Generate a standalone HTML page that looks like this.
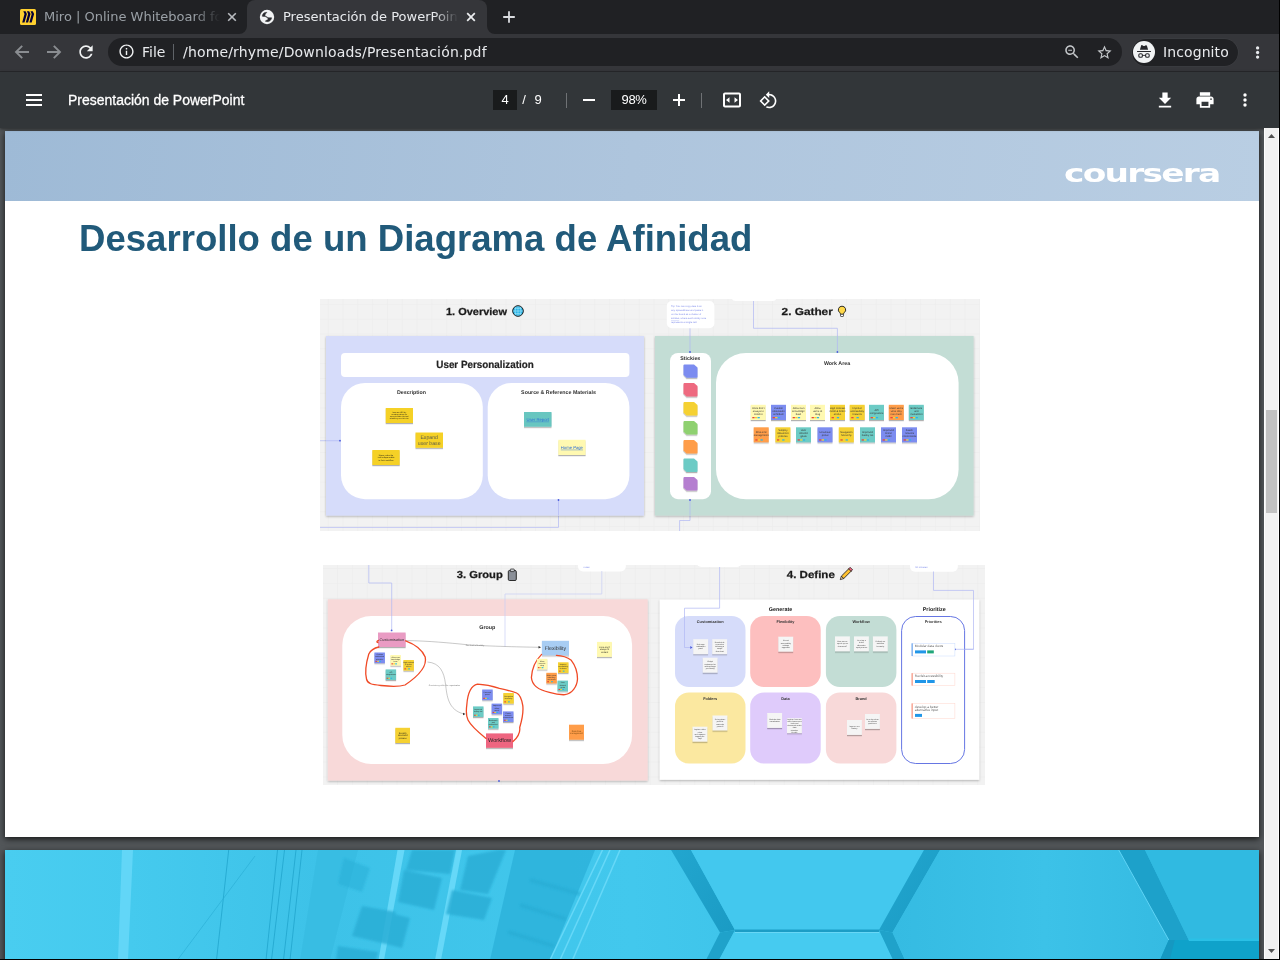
<!DOCTYPE html>
<html lang="es">
<head>
<meta charset="utf-8">
<title>Presentación de PowerPoint</title>
<style>
*{box-sizing:border-box;margin:0;padding:0}
html,body{width:1280px;height:960px;overflow:hidden;background:#525659;font-family:"DejaVu Sans","Liberation Sans",sans-serif}
.abs{position:absolute}
#root{will-change:transform;position:relative;width:1280px;height:960px;overflow:hidden;background:#525659}
/* browser chrome */
#tabstrip{left:0;top:0;width:1280px;height:34px;background:#202124}
#tab2{left:247px;top:0;width:240px;height:34px;background:#35363a;border-radius:8px 8px 0 0}
.tabtitle{font-size:13px;line-height:34px;white-space:nowrap;overflow:hidden;height:34px}
#navbar{left:0;top:34px;width:1280px;height:37px;background:#35363a}
#omni{left:108px;top:38px;width:1014px;height:28px;border-radius:14px;background:#202124}
#sep{left:0;top:71px;width:1280px;height:1px;background:#28292c}
#pdfbar{left:0;top:72px;width:1280px;height:56px;background:#323639;box-shadow:0 1px 3px rgba(0,0,0,.5)}
.rob{font-family:"Liberation Sans",sans-serif;color:#fff}
/* pages */
#page1{left:5px;top:131px;width:1254px;height:706px;background:#fff;box-shadow:0 2px 6px rgba(0,0,0,.75);overflow:hidden}
#page2{left:5px;top:850px;width:1254px;height:120px;background:#3ec3ea;box-shadow:0 2px 6px rgba(0,0,0,.75);overflow:hidden}
#band{left:0;top:0;width:1254px;height:70px;background:linear-gradient(96deg,#9ebad6 0%,#aec5dd 50%,#b9cee3 100%)}
#title{left:73.500px;top:86.500px;font-family:"Liberation Sans",sans-serif;font-weight:bold;font-size:37px;line-height:normal;color:#215a7a;white-space:nowrap;transform-origin:0 0;transform:scaleX(.9885)}
#sbar{left:1264px;top:128px;width:15px;height:831px;background:#f1f1f1;border-left:1px solid #fdfdfd;border-right:1px solid #fdfdfd}
#thumb{left:1266px;top:410px;width:11px;height:103px;background:#c1c1c1}
#bR{left:1279px;top:0;width:1px;height:960px;background:#000}
#bB{left:0;top:959px;width:1280px;height:1px;background:#000}
</style>
</head>
<body>
<div id="root">
<div id="tabstrip" class="abs"></div>
<div id="tab2" class="abs"></div>
<div id="navbar" class="abs"></div>
<div id="omni" class="abs"></div>
<div id="sep" class="abs"></div>

<!-- tab 1 (inactive) -->
<svg class="abs" style="left:20px;top:9px" width="16" height="16" viewBox="0 0 16 16"><rect width="16" height="16" rx="1.500" fill="#ffd02f"/><g fill="#050038"><path d="M3.300 2.300h2.300l1.300 2.600-2.400 8.700H2.200l2.300-8.600z"/><path d="M6.900 2.300h2.300l1.300 2.600-2.400 8.700H5.800l2.300-8.600z"/><path d="M10.500 2.300h2.300l1.300 2.600-2.400 8.700H9.400l2.300-8.600z"/></g></svg>
<div class="abs tabtitle" style="left:44px;top:0;width:176px;color:#9aa0a6;-webkit-mask-image:linear-gradient(90deg,#000 0,#000 150px,transparent 176px);mask-image:linear-gradient(90deg,#000 0,#000 150px,transparent 176px)">Miro | Online Whiteboard for Visual Collaboration</div>
<svg class="abs" style="left:224px;top:9px" width="16" height="16" viewBox="0 0 24 24"><path fill="none" stroke="#b9bcc0" stroke-width="2.400" d="M6.300 6.300L17.700 17.700M17.700 6.300L6.300 17.700"/></svg>
<!-- tab 2 (active) -->
<svg class="abs" style="left:239px;top:26px" width="8" height="8" viewBox="0 0 8 8"><path d="M8 0v8H0a8 8 0 0 0 8-8z" fill="#35363a"/></svg>
<svg class="abs" style="left:487px;top:26px" width="8" height="8" viewBox="0 0 8 8"><path d="M0 0v8h8a8 8 0 0 1-8-8z" fill="#35363a"/></svg>
<svg class="abs" style="left:259px;top:9px" width="16" height="16" viewBox="0 0 16 16"><circle cx="8" cy="8" r="7.200" fill="#f1f3f4"/><path fill="#2b2c30" stroke="#2b2c30" stroke-width=".5" stroke-linejoin="round" d="M7.900 3.300C6.500 3.300 5.500 3.600 4.750 4.100 3.800 5 3.300 6 3.200 7.200c1.300.4 2.800.2 4.050.3.750.5 1.550 1.200 2.500 1.250h2.850c0 .75-.2 1.350-.6 1.850-.6 1-1.400 1.600-2.250 1.900-1.250.3-2.450.1-3.450-.3.500-.2.800-.5.950-.95.950-.05 1.750-.55 1.850-1.250 0-.8-.6-1.300-1.200-1.600-.9-.4-1.700-.6-1.800-1.400-.1-.8-.1-1.400.5-2.200.4-.6.900-1 1.300-1.500z"/></svg>
<div class="abs tabtitle" style="left:283px;top:0;width:176px;color:#e8eaed;-webkit-mask-image:linear-gradient(90deg,#000 0,#000 151px,transparent 175px);mask-image:linear-gradient(90deg,#000 0,#000 151px,transparent 175px)">Presentación de PowerPoint</div>
<svg class="abs" style="left:463px;top:9px" width="16" height="16" viewBox="0 0 24 24"><path fill="none" stroke="#eceef0" stroke-width="2.600" d="M6.300 6.300L17.700 17.700M17.700 6.300L6.300 17.700"/></svg>
<svg class="abs" style="left:501px;top:9px" width="16" height="16" viewBox="0 0 16 16"><path fill="#dadce0" d="M7.100 2.200h1.800v4.900h4.900v1.800H8.900v4.900H7.100V8.900H2.200V7.100h4.900z"/></svg>
<!-- nav icons -->
<svg class="abs" style="left:12px;top:42px" width="20" height="20" viewBox="0 0 20 20"><path fill="none" stroke="#8a8d91" stroke-width="1.900" d="M17 10H4.500M10.200 3.800L4 10l6.200 6.200"/></svg>
<svg class="abs" style="left:44px;top:42px" width="20" height="20" viewBox="0 0 20 20"><path fill="none" stroke="#8a8d91" stroke-width="1.900" d="M3 10h12.500M9.800 3.800L16 10l-6.200 6.200"/></svg>
<svg class="abs" style="left:76px;top:42px" width="20" height="20" viewBox="0 0 24 24"><path fill="#f1f3f4" d="M17.650 6.350C16.200 4.900 14.210 4 12 4c-4.420 0-7.990 3.580-7.990 8s3.570 8 7.990 8c3.730 0 6.840-2.550 7.730-6h-2.080c-.820 2.330-3.040 4-5.650 4-3.310 0-6-2.690-6-6s2.690-6 6-6c1.660 0 3.140.69 4.220 1.780L13 11h7V4l-2.350 2.350z"/></svg>
<!-- omnibox content -->
<svg class="abs" style="left:118px;top:43.200px" width="17" height="17" viewBox="0 0 24 24"><path fill="#f1f3f4" d="M11 17h2v-6h-2v6zm1-15C6.480 2 2 6.480 2 12s4.480 10 10 10 10-4.480 10-10S17.520 2 12 2zm0 18c-4.410 0-8-3.590-8-8s3.590-8 8-8 8 3.590 8 8-3.590 8-8 8zM11 9h2V7h-2v2z"/></svg>
<div class="abs" style="left:142px;top:38px;height:28px;line-height:28px;font-size:14px;color:#e8eaed;white-space:nowrap">File</div>
<div class="abs" style="left:173px;top:44px;width:1px;height:16px;background:#5f6368"></div>
<div class="abs" style="left:183px;top:38px;height:28px;line-height:28px;font-size:14px;letter-spacing:.16px;color:#e8eaed;white-space:nowrap">/home/rhyme/Downloads/Presentación.pdf</div>
<svg class="abs" style="left:1062.500px;top:43px" width="18" height="18" viewBox="0 0 24 24"><path fill="#c4c7ca" d="M15.500 14h-.790l-.280-.270C15.410 12.590 16 11.110 16 9.500 16 5.910 13.090 3 9.500 3S3 5.910 3 9.500 5.910 16 9.500 16c1.610 0 3.090-.590 4.230-1.570l.270.280v.790l5 4.990L20.490 19l-4.990-5zm-6 0C7.010 14 5 11.990 5 9.500S7.010 5 9.500 5 14 7.010 14 9.500 11.990 14 9.500 14zM7 9h5v1.200H7z"/></svg>
<svg class="abs" style="left:1095.500px;top:43.500px" width="17" height="17" viewBox="0 0 24 24"><path fill="#c4c7ca" d="M22 9.240l-7.190-.620L12 2 9.190 8.630 2 9.240l5.460 4.730L5.820 21 12 17.270 18.180 21l-1.630-7.030L22 9.240zM12 15.400l-3.760 2.270 1-4.280-3.320-2.880 4.380-.380L12 6.100l1.710 4.040 4.380.380-3.320 2.880 1 4.280L12 15.400z"/></svg>
<!-- incognito chip -->
<div class="abs" style="left:1132px;top:38.500px;width:106px;height:27px;border-radius:13.500px;background:#202124;box-shadow:0 0 0 .5px #3f4044"></div>
<div class="abs" style="left:1133px;top:41px;width:22px;height:22px;border-radius:11px;background:#f1f3f4"></div>
<svg class="abs" style="left:1136px;top:44px" width="16" height="16" viewBox="0 0 16 16"><g fill="#26272b"><path d="M5.700 1.100c.3 0 .6.100.9.300l.5.300c.6.300 1.200.300 1.800 0l.5-.3c.7-.4 1.400-.3 1.600.5l1.100 3.800H3.900L5 1.900c.1-.5.400-.8.700-.8z"/><rect x="1" y="6.900" width="14" height="1.100" rx=".3"/><rect x="2.800" y="9.700" width="3.600" height="3.600" rx="1.300" fill="none" stroke="#26272b" stroke-width="1.100"/><rect x="9.600" y="9.700" width="3.600" height="3.600" rx="1.300" fill="none" stroke="#26272b" stroke-width="1.100"/><rect x="6.400" y="10.900" width="3.200" height=".9"/></g></svg>
<div class="abs" style="left:1163px;top:38px;height:28px;line-height:28px;font-size:14px;letter-spacing:.1px;color:#e8eaed;white-space:nowrap">Incognito</div>
<svg class="abs" style="left:1248px;top:42px" width="20" height="20" viewBox="0 0 20 20"><g fill="#e8eaed"><circle cx="9.600" cy="5.900" r="1.650"/><circle cx="9.600" cy="10.500" r="1.650"/><circle cx="9.600" cy="15.100" r="1.650"/></g></svg>

<div id="page1" class="abs">
<div id="band" class="abs"></div>
<div id="title" class="abs">Desarrollo de un Diagrama de Afinidad</div>
<div class="abs" id="logo" style="left:1059px;top:26.500px;font-family:'DejaVu Sans','Liberation Sans',sans-serif;font-weight:bold;font-size:25.500px;line-height:30px;color:#fff;white-space:nowrap;transform-origin:0 50%;transform:scaleX(1.35);letter-spacing:-1.300px">coursera</div>

</div>
<div id="page2" class="abs">
<svg class="abs" style="left:0;top:0" width="1254" height="110" viewBox="5 850 1254 110">
<defs>
<linearGradient id="p2bg" x1="0" y1="0" x2="1" y2="0"><stop offset="0" stop-color="#49cdf0"/><stop offset=".1" stop-color="#45caee"/><stop offset=".25" stop-color="#3dc2e8"/><stop offset=".5" stop-color="#42c8ed"/><stop offset=".75" stop-color="#38bee5"/><stop offset="1" stop-color="#30bae1"/></linearGradient>
<linearGradient id="p2hx" x1="0" y1="0" x2="1" y2="0"><stop offset="0" stop-color="#35bbe2"/><stop offset=".55" stop-color="#3cc2e8"/><stop offset="1" stop-color="#35bbe2"/></linearGradient>
<linearGradient id="p2bd" x1="0" y1="0" x2="1" y2="1"><stop offset="0" stop-color="#22a6cf"/><stop offset="1" stop-color="#1a9bc4"/></linearGradient>
<filter id="p2bl" x="-5%" y="-20%" width="110%" height="140%"><feGaussianBlur stdDeviation=".9"/></filter>
</defs>
<rect x="5" y="850" width="1254" height="110" fill="url(#p2bg)"/>
<!-- left building reflections -->
<path d="M122 850h11l-5 110h-10z" fill="#62d6f7"/>
<g fill="none" stroke="#1fa3cb" stroke-width="1" opacity=".75"><path d="M228.700 850L216.500 960"/><path d="M277.500 850L266 960"/><path d="M284.500 850L271.500 960"/><path d="M296 850L283.500 960"/><path d="M302 850L290 960"/><path d="M255 856L177.500 960" opacity=".6"/></g>
<!-- mid building -->
<path d="M318 850h40L330 960H300z" fill="#36b9e0" opacity=".6"/>
<path d="M397.500 850h7L384 960h-5.500z" fill="#66d8f8"/>
<path d="M456 850h6L441 960h-6z" fill="#66d8f8"/>
<g fill="#2aaed6" opacity=".85" filter="url(#p2bl)"><path d="M412 850h43l-5 24-44-4z"/><path d="M404 870l38 8-8 32-36-8z"/><path d="M362 906l34 6-10 32-34-8z"/><path d="M394 914l16 4-8 30-16-4z"/><path d="M468 856l30-6h8l-18 44-28-4z"/><path d="M452 890l40 8-8 22-38-6z"/><path d="M344 858l26 10-8 24-24-8z" opacity=".6"/><path d="M338 946l40 6-2 8h-40z"/></g>
<path d="M515 850h80L550 960H490z" fill="#2db2da" opacity=".85"/>
<g fill="none" stroke="#27abd3" stroke-width="4" opacity=".6" filter="url(#p2bl)"><path d="M530 880l50 14"/><path d="M520 905l46 14"/><path d="M508 932l46 14"/></g>
<g fill="none" stroke="#6bdaf9" stroke-width="1.500" opacity=".9"><path d="M602.500 850L550 960"/><path d="M610 850L560 960"/><path d="M620 850L572.500 960"/></g>
<!-- hexagons -->
<path d="M671 850h20L735 930l-15 2.500z" fill="url(#p2bd)"/>
<path d="M720 932.500l15-2.500-1 2-15 28h-13z" fill="#1fa2ca"/>
<path d="M691 850H924L879 930H735z" fill="#43c8ee"/>
<path d="M735 929.500H879v2.500H735z" fill="#1c9dc6"/>
<path d="M734 932h146l14 28H719z" fill="#46cbf0"/>
<path d="M735 932H879v1H735z" fill="#7fe0fa" opacity=".6"/>
<path d="M924 850h16L892.500 932.500L879 930z" fill="url(#p2bd)"/>
<path d="M879 930l13.500 2.500L905 960h-12z" fill="#1fa2ca"/>
<path d="M940 850H1118.750l50 90-8.750 20H905l-12.500-27.500z" fill="url(#p2hx)"/>
<path d="M1118.750 850h26.250l43.750 90h-20z" fill="#1da1ca"/>
<path d="M1118.750 850l50 90" stroke="#5fd4f6" stroke-width="1" fill="none"/>
<path d="M1145 850h114v90h-70.250z" fill="#30bae1"/>
<path d="M1168.750 940h90.250v20H1160z" fill="#0fa2ca"/>
<path d="M1188.750 938.500h70.250v2.500h-70.250z" fill="#2ac0e6"/>
<path d="M1160 960l8.750-20 6 0-5 20z" fill="#1598c1"/>
</svg>

</div>
<svg class="abs" style="left:320px;top:299px" width="660" height="232" viewBox="320 299 660 232" text-rendering="geometricPrecision" font-family="'Liberation Sans',sans-serif">
<defs><pattern id="g1" x="327.700" y="303.900" width="14.810" height="14.810" patternUnits="userSpaceOnUse"><path d="M0 .5H14.810M.5 0V14.810" stroke="#ededed" stroke-width=".7" fill="none"/></pattern><filter id="sh1" x="-5%" y="-5%" width="110%" height="112%"><feDropShadow dx="0" dy="1" stdDeviation="1" flood-color="#000" flood-opacity=".28"/></filter><filter id="ss1" x="-20%" y="-20%" width="140%" height="160%"><feDropShadow dx="0" dy="1.2" stdDeviation=".7" flood-color="#000" flood-opacity=".3"/></filter></defs>
<rect x="320" y="299" width="660" height="232" fill="#f2f2f2"/>
<rect x="320" y="299" width="660" height="232" fill="url(#g1)"/>
<g fill="none" stroke="#b0b8f4" stroke-width=".7">
<path d="M320 440.700H340"/>
<path d="M320 527.400H558.500V500"/>
<path d="M753.500 299V328.300H837.400V352"/>
<path d="M690 328V352"/>
<path d="M690 500V520.500H679.600V531"/>
</g>
<rect x="326" y="336" width="318" height="179.600" fill="#d6dcfa" filter="url(#sh1)"/>
<rect x="655" y="336" width="318.600" height="179.600" fill="#c3ddd5" filter="url(#sh1)"/>
<g fill="none" stroke="#b0b8f4" stroke-width=".7"><path d="M326 440.700H340"/><path d="M558.500 500V515"/><path d="M837.400 336V352"/><path d="M690 336V352"/><path d="M690 500V515"/></g>
<rect x="341" y="353" width="288.400" height="24" rx="4" fill="#fff"/>
<rect x="341" y="383" width="141.800" height="116.200" rx="24" fill="#fff"/>
<rect x="487.700" y="383" width="141.700" height="116.200" rx="24" fill="#fff"/>
<rect x="670" y="353" width="41" height="146.200" rx="8" fill="#fff"/>
<rect x="716" y="353" width="242.600" height="146.200" rx="30" fill="#fff"/>
<rect x="666.800" y="301" width="47.600" height="27.300" rx="5" fill="#fff"/>
<rect x="731.600" y="290" width="45" height="11" rx="4" fill="#fff"/>
<g fill="#4a5bdb"><circle cx="340" cy="440.700" r=".9"/><circle cx="558.500" cy="500" r=".9"/><circle cx="690" cy="352" r=".9"/><circle cx="837.400" cy="352" r=".9"/><circle cx="690" cy="500" r=".9"/></g>
<g font-weight="bold" fill="#1a1a1a" text-anchor="middle">
<text x="476.500" y="314.700" font-size="10.200" textLength="61" lengthAdjust="spacingAndGlyphs" stroke="#1a1a1a" stroke-width=".25">1. Overview</text>
<text x="807.200" y="314.700" font-size="10.200" textLength="51.200" lengthAdjust="spacingAndGlyphs" stroke="#1a1a1a" stroke-width=".25">2. Gather</text>
<text x="485" y="367.600" font-size="10.400" textLength="97.400" lengthAdjust="spacingAndGlyphs" fill="#222" stroke="#222" stroke-width=".2">User Personalization</text>
<text x="411.500" y="393.600" font-size="5.300" fill="#333">Description</text>
<text x="558.500" y="393.600" font-size="5.300" fill="#333">Source &amp; Reference Materials</text>
<text x="690.300" y="359.800" font-size="5.300" fill="#333">Stickies</text>
<text x="837" y="364.800" font-size="5.300" fill="#333">Work Area</text>
</g>
<g><circle cx="518" cy="311" r="5.300" fill="#29b6e8" stroke="#1a1a1a" stroke-width="1"/><path d="M513 311h10M518 306v10M514.500 308.300h7M514.500 313.700h7M516 306.500q-2 4.500 0 9M520 306.500q2 4.500 0 9" fill="none" stroke="#bfeaf8" stroke-width=".5"/></g>
<g><path d="M842 306.200a3.600 3.600 0 0 1 2.200 6.500c-.5.400-.6 1-.6 1.600h-3.200c0-.6-.1-1.200-.6-1.600a3.600 3.600 0 0 1 2.200-6.500z" fill="#ffd84a" stroke="#1a1a1a" stroke-width=".9"/><rect x="840.500" y="314.300" width="3" height="2.200" rx=".6" fill="#fff" stroke="#1a1a1a" stroke-width=".7"/></g>
<g font-size="2.500" fill="#7f8cea"><text x="671" y="307.300">Tip: You can copy data from</text><text x="671" y="311.200">any spreadsheet and paste it</text><text x="671" y="315.100">on the board as a cluster of</text><text x="671" y="319"><tspan text-decoration="underline">stickies</tspan>, where each sticky note</text><text x="671" y="322.900">represents a single cell.</text></g>
<rect x="385.7" y="408.0" width="27.3" height="15.0" fill="#f5d128" filter="url(#ss1)"/>
<text x="399.3" y="412.84" font-size="1.9" fill="#1a1a1a" text-anchor="middle">Increase ROI by</text>
<text x="399.3" y="415.02" font-size="1.9" fill="#1a1a1a" text-anchor="middle">creating values for</text>
<text x="399.3" y="417.21" font-size="1.9" fill="#1a1a1a" text-anchor="middle">users to make the tool</text>
<text x="399.3" y="419.39" font-size="1.9" fill="#1a1a1a" text-anchor="middle">what they need it to be</text>
<rect x="415.5" y="432.5" width="27.5" height="15.3" fill="#f5d128" filter="url(#ss1)"/>
<text x="429.2" y="438.85" font-size="5.2" fill="#5a5a4a" text-anchor="middle">Expand</text>
<text x="429.2" y="444.83" font-size="5.2" fill="#5a5a4a" text-anchor="middle">user base</text>
<rect x="372.3" y="450.0" width="27.4" height="15.0" fill="#f5d128" filter="url(#ss1)"/>
<text x="386.0" y="455.77" font-size="2.1" fill="#1a1a1a" text-anchor="middle">Users make the</text>
<text x="386.0" y="458.18" font-size="2.1" fill="#1a1a1a" text-anchor="middle">tool indispensable</text>
<text x="386.0" y="460.60" font-size="2.1" fill="#1a1a1a" text-anchor="middle">to their workflow</text>
<rect x="524.0" y="412.0" width="27.5" height="14.7" fill="#67c6c0" filter="url(#ss1)"/>
<text x="537.8" y="420.71" font-size="4.2" fill="#2f6fd6" text-anchor="middle" text-decoration="underline">User Report</text>
<rect x="558.3" y="439.8" width="27.3" height="15.2" fill="#fff9b1" filter="url(#ss1)"/>
<text x="571.9" y="448.76" font-size="4.2" fill="#2f6fd6" text-anchor="middle" text-decoration="underline">Home Page</text>
<path d="M684.400 364.4h9.600l3.500 3v9.400q0 1-1 1h-10l-3-3v-9.400q0-1 .9-1z" fill="#7b8cf0" filter="url(#ss1)"/>
<path d="M684.400 383.0h9.600l3.500 3v9.400q0 1-1 1h-10l-3-3v-9.400q0-1 .9-1z" fill="#ee6a80" filter="url(#ss1)"/>
<path d="M684.400 402.0h9.600l3.500 3v9.400q0 1-1 1h-10l-3-3v-9.400q0-1 .9-1z" fill="#f5d130" filter="url(#ss1)"/>
<path d="M684.400 421.0h9.600l3.500 3v9.400q0 1-1 1h-10l-3-3v-9.400q0-1 .9-1z" fill="#8fd16f" filter="url(#ss1)"/>
<path d="M684.400 440.0h9.600l3.500 3v9.400q0 1-1 1h-10l-3-3v-9.400q0-1 .9-1z" fill="#ff9d48" filter="url(#ss1)"/>
<path d="M684.400 458.5h9.600l3.500 3v9.400q0 1-1 1h-10l-3-3v-9.400q0-1 .9-1z" fill="#6ccbc5" filter="url(#ss1)"/>
<path d="M684.400 477.0h9.600l3.500 3v9.400q0 1-1 1h-10l-3-3v-9.400q0-1 .9-1z" fill="#b57fd0" filter="url(#ss1)"/>
<rect x="750.7" y="404.8" width="15.0" height="15.2" fill="#fff9b1" filter="url(#ss1)"/>
<text x="758.2" y="409.06" font-size="2.6" fill="#333" text-anchor="middle">Icons don't</text>
<text x="758.2" y="412.05" font-size="2.6" fill="#333" text-anchor="middle">always fit</text>
<text x="758.2" y="415.04" font-size="2.6" fill="#333" text-anchor="middle">content</text>
<rect x="752.3" y="417.0" width="2.300" height="1.300" fill="#e8453c"/>
<rect x="754.9" y="417.0" width="2.300" height="1.300" fill="#f5d130"/>
<rect x="757.5" y="417.0" width="2.300" height="1.300" fill="#29b6e8"/>
<rect x="771.0" y="404.8" width="15.0" height="15.2" fill="#7b8cf0" filter="url(#ss1)"/>
<text x="778.5" y="409.06" font-size="2.6" fill="#333" text-anchor="middle">Custom</text>
<text x="778.5" y="412.05" font-size="2.6" fill="#333" text-anchor="middle">notification</text>
<text x="778.5" y="415.04" font-size="2.6" fill="#333" text-anchor="middle">schedule</text>
<rect x="772.6" y="417.0" width="2.300" height="1.300" fill="#e8453c"/>
<rect x="775.2" y="417.0" width="2.300" height="1.300" fill="#f5d130"/>
<rect x="777.8" y="417.0" width="2.300" height="1.300" fill="#29b6e8"/>
<rect x="791.0" y="404.8" width="15.0" height="15.2" fill="#fff9b1" filter="url(#ss1)"/>
<text x="798.5" y="409.06" font-size="2.6" fill="#333" text-anchor="middle">Allow own</text>
<text x="798.5" y="412.05" font-size="2.6" fill="#333" text-anchor="middle">knowledge</text>
<text x="798.5" y="415.04" font-size="2.6" fill="#333" text-anchor="middle">base</text>
<rect x="792.6" y="417.0" width="2.300" height="1.300" fill="#e8453c"/>
<rect x="795.2" y="417.0" width="2.300" height="1.300" fill="#f5d130"/>
<rect x="797.8" y="417.0" width="2.300" height="1.300" fill="#29b6e8"/>
<rect x="810.0" y="404.8" width="15.0" height="15.2" fill="#fff9b1" filter="url(#ss1)"/>
<text x="817.5" y="409.06" font-size="2.6" fill="#333" text-anchor="middle">Allow</text>
<text x="817.5" y="412.05" font-size="2.6" fill="#333" text-anchor="middle">users to</text>
<text x="817.5" y="415.04" font-size="2.6" fill="#333" text-anchor="middle">drag</text>
<rect x="811.6" y="417.0" width="2.300" height="1.300" fill="#e8453c"/>
<rect x="814.2" y="417.0" width="2.300" height="1.300" fill="#f5d130"/>
<rect x="816.8" y="417.0" width="2.300" height="1.300" fill="#29b6e8"/>
<rect x="830.0" y="404.8" width="15.0" height="15.2" fill="#f5d130" filter="url(#ss1)"/>
<text x="837.5" y="409.06" font-size="2.6" fill="#333" text-anchor="middle">High contrast</text>
<text x="837.5" y="412.05" font-size="2.6" fill="#333" text-anchor="middle">mode & better</text>
<text x="837.5" y="415.04" font-size="2.6" fill="#333" text-anchor="middle">alt text</text>
<rect x="831.6" y="417.0" width="2.300" height="1.300" fill="#e8453c"/>
<rect x="834.2" y="417.0" width="2.300" height="1.300" fill="#f5d130"/>
<rect x="836.8" y="417.0" width="2.300" height="1.300" fill="#29b6e8"/>
<rect x="849.7" y="404.8" width="15.0" height="15.2" fill="#f5d130" filter="url(#ss1)"/>
<text x="857.2" y="409.06" font-size="2.6" fill="#333" text-anchor="middle">Improve</text>
<text x="857.2" y="412.05" font-size="2.6" fill="#333" text-anchor="middle">accessibility</text>
<text x="857.2" y="415.04" font-size="2.6" fill="#333" text-anchor="middle">features</text>
<rect x="851.3" y="417.0" width="2.300" height="1.300" fill="#e8453c"/>
<rect x="853.9" y="417.0" width="2.300" height="1.300" fill="#f5d130"/>
<rect x="856.5" y="417.0" width="2.300" height="1.300" fill="#29b6e8"/>
<rect x="869.0" y="404.8" width="15.0" height="15.2" fill="#6ccbc5" filter="url(#ss1)"/>
<text x="876.5" y="410.55" font-size="2.6" fill="#333" text-anchor="middle">API</text>
<text x="876.5" y="413.54" font-size="2.6" fill="#333" text-anchor="middle">integrations</text>
<rect x="870.6" y="417.0" width="2.300" height="1.300" fill="#e8453c"/>
<rect x="873.2" y="417.0" width="2.300" height="1.300" fill="#f5d130"/>
<rect x="875.8" y="417.0" width="2.300" height="1.300" fill="#29b6e8"/>
<rect x="888.8" y="404.8" width="15.0" height="15.2" fill="#ff9d48" filter="url(#ss1)"/>
<text x="896.3" y="409.06" font-size="2.6" fill="#333" text-anchor="middle">Make users</text>
<text x="896.3" y="412.05" font-size="2.6" fill="#333" text-anchor="middle">what they</text>
<text x="896.3" y="415.04" font-size="2.6" fill="#333" text-anchor="middle">can reach</text>
<rect x="890.4" y="417.0" width="2.300" height="1.300" fill="#e8453c"/>
<rect x="893.0" y="417.0" width="2.300" height="1.300" fill="#f5d130"/>
<rect x="895.6" y="417.0" width="2.300" height="1.300" fill="#29b6e8"/>
<rect x="908.8" y="404.8" width="15.0" height="15.2" fill="#6ccbc5" filter="url(#ss1)"/>
<text x="916.3" y="409.06" font-size="2.6" fill="#333" text-anchor="middle">Bookmark</text>
<text x="916.3" y="412.05" font-size="2.6" fill="#333" text-anchor="middle">and</text>
<text x="916.3" y="415.04" font-size="2.6" fill="#333" text-anchor="middle">multiselect</text>
<rect x="910.4" y="417.0" width="2.300" height="1.300" fill="#e8453c"/>
<rect x="913.0" y="417.0" width="2.300" height="1.300" fill="#f5d130"/>
<rect x="915.6" y="417.0" width="2.300" height="1.300" fill="#29b6e8"/>
<rect x="753.7" y="427.3" width="15.0" height="15.0" fill="#ff9d48" filter="url(#ss1)"/>
<text x="761.2" y="432.95" font-size="2.6" fill="#333" text-anchor="middle">Real-time</text>
<text x="761.2" y="435.94" font-size="2.6" fill="#333" text-anchor="middle">management</text>
<rect x="755.3" y="439.3" width="2.300" height="1.300" fill="#e8453c"/>
<rect x="757.9" y="439.3" width="2.300" height="1.300" fill="#f5d130"/>
<rect x="760.5" y="439.3" width="2.300" height="1.300" fill="#29b6e8"/>
<rect x="775.4" y="427.3" width="15.0" height="15.0" fill="#f5d130" filter="url(#ss1)"/>
<text x="782.9" y="431.45" font-size="2.6" fill="#333" text-anchor="middle">Simplify</text>
<text x="782.9" y="434.44" font-size="2.6" fill="#333" text-anchor="middle">document</text>
<text x="782.9" y="437.44" font-size="2.6" fill="#333" text-anchor="middle">process</text>
<rect x="777.0" y="439.3" width="2.300" height="1.300" fill="#e8453c"/>
<rect x="779.6" y="439.3" width="2.300" height="1.300" fill="#f5d130"/>
<rect x="782.2" y="439.3" width="2.300" height="1.300" fill="#29b6e8"/>
<rect x="796.0" y="427.3" width="15.0" height="15.0" fill="#6ccbc5" filter="url(#ss1)"/>
<text x="803.5" y="431.45" font-size="2.6" fill="#333" text-anchor="middle">User</text>
<text x="803.5" y="434.44" font-size="2.6" fill="#333" text-anchor="middle">defined</text>
<text x="803.5" y="437.44" font-size="2.6" fill="#333" text-anchor="middle">goals</text>
<rect x="797.6" y="439.3" width="2.300" height="1.300" fill="#e8453c"/>
<rect x="800.2" y="439.3" width="2.300" height="1.300" fill="#f5d130"/>
<rect x="802.8" y="439.3" width="2.300" height="1.300" fill="#29b6e8"/>
<rect x="817.5" y="427.3" width="15.0" height="15.0" fill="#7b8cf0" filter="url(#ss1)"/>
<text x="825.0" y="432.95" font-size="2.6" fill="#333" text-anchor="middle">Universal</text>
<text x="825.0" y="435.94" font-size="2.6" fill="#333" text-anchor="middle">portal</text>
<rect x="819.1" y="439.3" width="2.300" height="1.300" fill="#e8453c"/>
<rect x="821.7" y="439.3" width="2.300" height="1.300" fill="#f5d130"/>
<rect x="824.3" y="439.3" width="2.300" height="1.300" fill="#29b6e8"/>
<rect x="838.8" y="427.3" width="15.0" height="15.0" fill="#f5d130" filter="url(#ss1)"/>
<text x="846.3" y="432.95" font-size="2.6" fill="#333" text-anchor="middle">Navigation</text>
<text x="846.3" y="435.94" font-size="2.6" fill="#333" text-anchor="middle">hierarchy</text>
<rect x="840.4" y="439.3" width="2.300" height="1.300" fill="#e8453c"/>
<rect x="843.0" y="439.3" width="2.300" height="1.300" fill="#f5d130"/>
<rect x="845.6" y="439.3" width="2.300" height="1.300" fill="#29b6e8"/>
<rect x="860.0" y="427.3" width="15.0" height="15.0" fill="#6ccbc5" filter="url(#ss1)"/>
<text x="867.5" y="432.95" font-size="2.6" fill="#333" text-anchor="middle">Improved</text>
<text x="867.5" y="435.94" font-size="2.6" fill="#333" text-anchor="middle">history list</text>
<rect x="861.6" y="439.3" width="2.300" height="1.300" fill="#e8453c"/>
<rect x="864.2" y="439.3" width="2.300" height="1.300" fill="#f5d130"/>
<rect x="866.8" y="439.3" width="2.300" height="1.300" fill="#29b6e8"/>
<rect x="881.0" y="427.3" width="15.0" height="15.0" fill="#7b8cf0" filter="url(#ss1)"/>
<text x="888.5" y="431.45" font-size="2.6" fill="#333" text-anchor="middle">Improved</text>
<text x="888.5" y="434.44" font-size="2.6" fill="#333" text-anchor="middle">offline</text>
<text x="888.5" y="437.44" font-size="2.6" fill="#333" text-anchor="middle">mode</text>
<rect x="882.6" y="439.3" width="2.300" height="1.300" fill="#e8453c"/>
<rect x="885.2" y="439.3" width="2.300" height="1.300" fill="#f5d130"/>
<rect x="887.8" y="439.3" width="2.300" height="1.300" fill="#29b6e8"/>
<rect x="902.0" y="427.3" width="15.0" height="15.0" fill="#7b8cf0" filter="url(#ss1)"/>
<text x="909.5" y="431.45" font-size="2.6" fill="#333" text-anchor="middle">Faster</text>
<text x="909.5" y="434.44" font-size="2.6" fill="#333" text-anchor="middle">network</text>
<text x="909.5" y="437.44" font-size="2.6" fill="#333" text-anchor="middle">connections</text>
<rect x="903.6" y="439.3" width="2.300" height="1.300" fill="#e8453c"/>
<rect x="906.2" y="439.3" width="2.300" height="1.300" fill="#f5d130"/>
<rect x="908.8" y="439.3" width="2.300" height="1.300" fill="#29b6e8"/>
</svg>
<svg class="abs" style="left:323px;top:565px" width="662" height="220" viewBox="323 565 662 220" text-rendering="geometricPrecision" font-family="'Liberation Sans',sans-serif">
<defs><pattern id="g2" x="322.100" y="568" width="14.890" height="14.890" patternUnits="userSpaceOnUse"><path d="M0 .5H14.890M.5 0V14.890" stroke="#ededed" stroke-width=".7" fill="none"/></pattern><filter id="sh2" x="-5%" y="-5%" width="110%" height="112%"><feDropShadow dx="0" dy="1" stdDeviation="1" flood-color="#000" flood-opacity=".28"/></filter><filter id="ss2" x="-20%" y="-20%" width="140%" height="160%"><feDropShadow dx="0" dy="1.200" stdDeviation=".7" flood-color="#000" flood-opacity=".3"/></filter></defs>
<rect x="323" y="565" width="662" height="220" fill="#f2f2f2"/>
<rect x="323" y="565" width="662" height="220" fill="url(#g2)"/>
<rect x="578" y="555" width="47.800" height="16.400" rx="5" fill="#fff"/>
<rect x="696.400" y="555" width="45.600" height="12" rx="5" fill="#fff"/>
<rect x="910" y="555" width="47.800" height="16.800" rx="5" fill="#fff"/>
<g font-size="2.500" fill="#7f8cea"><text x="583.500" y="567.500">notes</text><text x="915.200" y="567.500">10 minutes</text></g>
<rect x="327.800" y="599.300" width="319.900" height="181.300" fill="#f8d9d9" filter="url(#sh2)"/>
<rect x="659.700" y="599.600" width="319.500" height="180.200" fill="#fff" filter="url(#sh2)"/>
<rect x="342.300" y="616" width="289.800" height="148" rx="29" fill="#fff"/>
<g fill="none" stroke="#b0b8f4" stroke-width=".7">
<path d="M368.800 565V583H391.700V630"/>
<path d="M601.800 571V594H505V646.600" stroke="#c9cef5"/>
<path d="M719.600 567V608.200H684.500V647.500H692"/>
<path d="M933.500 571.500V590.400H973.500V649.300H955"/>
</g>
<g fill="#4a5bdb"><circle cx="391.600" cy="630.400" r=".9"/><circle cx="499" cy="781" r=".9"/><circle cx="955" cy="649.300" r=".9"/><path d="M690.500 646.200l2 1.300-2 1.300z"/></g>
<g font-weight="bold" fill="#1a1a1a" text-anchor="middle">
<text x="479.800" y="578.300" font-size="10.200" textLength="46" lengthAdjust="spacingAndGlyphs" stroke="#1a1a1a" stroke-width=".25">3. Group</text>
<text x="810.800" y="578.300" font-size="10.200" textLength="48" lengthAdjust="spacingAndGlyphs" stroke="#1a1a1a" stroke-width=".25">4. Define</text>
<text x="487.300" y="629" font-size="5.400" fill="#333">Group</text>
<text x="780.500" y="610.700" font-size="5.400" fill="#222">Generate</text>
<text x="934.300" y="610.700" font-size="5.400" fill="#222">Prioritize</text>
</g>
<g><rect x="508.300" y="570.500" width="8" height="10" rx="1.200" fill="#8a8f98" stroke="#1a1a1a" stroke-width=".9"/><rect x="510.300" y="569" width="4" height="2.600" rx=".6" fill="#c9ccd1" stroke="#1a1a1a" stroke-width=".7"/></g>
<g transform="rotate(45 845.200 574.700)"><rect x="843.500" y="567.500" width="3.400" height="11" fill="#ffc12e" stroke="#1a1a1a" stroke-width=".8"/><path d="M843.500 578.500l1.700 3.200 1.700-3.200z" fill="#f3d2a2" stroke="#1a1a1a" stroke-width=".7"/><rect x="843.500" y="566" width="3.400" height="2.200" fill="#f0667f" stroke="#1a1a1a" stroke-width=".7"/></g>
<g fill="none" stroke="#777" stroke-width=".4"><path d="M405.600 640.500C430 641 450 643 465 644.500S520 647 540 647.300"/><path d="M427.500 662C440 663 444 672 445.500 684S448 710 464 714"/></g>
<g fill="#333"><path d="M538.500 646l2.600 1.300-2.600 1.300z"/><path d="M463 712.700l2.600 1.300-2.600 1.300z"/></g>
<g font-size="2" fill="#777" text-anchor="middle"><text x="475" y="646">Can lead to flexibility</text><text x="444.500" y="686">Consistency within the organization</text></g>
<rect x="378.0" y="632.5" width="27.6" height="14.5" fill="#e99bc3" filter="url(#ss2)"/>
<text x="391.8" y="641.02" font-size="3.9" fill="#333" text-anchor="middle">Customisation</text>
<rect x="541.9" y="640.8" width="27.1" height="14.5" fill="#a8cdf3" filter="url(#ss2)"/>
<text x="555.4" y="649.74" font-size="5.2" fill="#333" text-anchor="middle">Flexibility</text>
<rect x="486.0" y="733.4" width="27.0" height="14.4" fill="#ee6580" filter="url(#ss2)"/>
<text x="499.5" y="742.42" font-size="5.6" fill="#222" text-anchor="middle">Workflow</text>
<rect x="597.0" y="641.9" width="14.9" height="15.0" fill="#fff9b1" filter="url(#ss2)"/>
<text x="604.5" y="647.59" font-size="2.2" fill="#1a1a1a" text-anchor="middle">Icons don't</text>
<text x="604.5" y="650.12" font-size="2.2" fill="#1a1a1a" text-anchor="middle">always fit</text>
<text x="604.5" y="652.64" font-size="2.2" fill="#1a1a1a" text-anchor="middle">content</text>
<rect x="395.3" y="727.8" width="14.7" height="15.2" fill="#f5d130" filter="url(#ss2)"/>
<text x="402.7" y="733.59" font-size="2.2" fill="#1a1a1a" text-anchor="middle">Simplify</text>
<text x="402.7" y="736.12" font-size="2.2" fill="#1a1a1a" text-anchor="middle">document</text>
<text x="402.7" y="738.64" font-size="2.2" fill="#1a1a1a" text-anchor="middle">process</text>
<rect x="569.0" y="724.7" width="15.0" height="15.0" fill="#ff9d48" filter="url(#ss2)"/>
<text x="576.5" y="731.65" font-size="2.2" fill="#7a4a10" text-anchor="middle">Real-time</text>
<text x="576.5" y="734.18" font-size="2.2" fill="#7a4a10" text-anchor="middle">management</text>
<g fill="none" stroke="#f04a26" stroke-width="1.300" stroke-linecap="round" stroke-linejoin="round">
<path d="M378.500 640.500C376.500 641 376.500 642.500 378 642.600M405.600 640.800C413 643.500 422 649 425.200 657C427 665 420 675 405 685C399 686.800 390 686.500 381 685.500C372 684.500 367.500 684 366.500 679C365 673 365.500 665 368.800 654C371 649.500 375 647.800 378.800 647"/>
<path d="M513 741.600C518 737 520.500 733 519.700 727.500C522 720 523.500 712 522.800 705.600C521.500 698 519 694 516.600 693C511 691 505 689.600 499.400 688.400C492 686 484 684.500 477.500 684.200C470 686 467.500 695 466.800 705C466 711 466 716 468 720C471 726 478 732 486 738.400"/>
<path d="M541.600 654.400C536 660 532 668 531.400 677.500C532 685 538 690 549.400 692.300C555 694 560 695 565 694.700C572 693.500 577 687 577.500 679C577.500 671 575 665 571.300 660.300C567 657 562 655.500 556.400 655.300"/>
</g>
<rect x="374.4" y="652.5" width="10.5" height="10.6" fill="#7b8cf0" filter="url(#ss2)"/>
<text x="379.6" y="655.27" font-size="1.85" fill="#333" text-anchor="middle">Custom</text>
<text x="379.6" y="657.40" font-size="1.85" fill="#333" text-anchor="middle">notification</text>
<text x="379.6" y="659.53" font-size="1.85" fill="#333" text-anchor="middle">schedule</text>
<rect x="375.4" y="660.8" width="1.700" height="1.100" fill="#e8453c"/>
<rect x="377.3" y="660.8" width="1.700" height="1.100" fill="#f5d130"/>
<rect x="379.2" y="660.8" width="1.700" height="1.100" fill="#29b6e8"/>
<rect x="390.4" y="655.0" width="10.5" height="10.6" fill="#fff9b1" filter="url(#ss2)"/>
<text x="395.6" y="657.77" font-size="1.85" fill="#333" text-anchor="middle">Allow own</text>
<text x="395.6" y="659.90" font-size="1.85" fill="#333" text-anchor="middle">knowledge</text>
<text x="395.6" y="662.03" font-size="1.85" fill="#333" text-anchor="middle">base</text>
<rect x="391.4" y="663.3" width="1.700" height="1.100" fill="#e8453c"/>
<rect x="393.3" y="663.3" width="1.700" height="1.100" fill="#f5d130"/>
<rect x="395.2" y="663.3" width="1.700" height="1.100" fill="#29b6e8"/>
<rect x="403.4" y="660.0" width="10.5" height="10.6" fill="#f5d130" filter="url(#ss2)"/>
<text x="408.6" y="662.77" font-size="1.85" fill="#333" text-anchor="middle">High contrast</text>
<text x="408.6" y="664.90" font-size="1.85" fill="#333" text-anchor="middle">& better</text>
<text x="408.6" y="667.03" font-size="1.85" fill="#333" text-anchor="middle">alt text</text>
<rect x="404.4" y="668.3" width="1.700" height="1.100" fill="#e8453c"/>
<rect x="406.3" y="668.3" width="1.700" height="1.100" fill="#f5d130"/>
<rect x="408.2" y="668.3" width="1.700" height="1.100" fill="#29b6e8"/>
<rect x="385.6" y="669.4" width="10.5" height="10.6" fill="#6ccbc5" filter="url(#ss2)"/>
<text x="390.9" y="673.24" font-size="1.85" fill="#333" text-anchor="middle">API</text>
<text x="390.9" y="675.36" font-size="1.85" fill="#333" text-anchor="middle">integrations</text>
<rect x="386.6" y="677.7" width="1.700" height="1.100" fill="#e8453c"/>
<rect x="388.5" y="677.7" width="1.700" height="1.100" fill="#f5d130"/>
<rect x="390.4" y="677.7" width="1.700" height="1.100" fill="#29b6e8"/>
<rect x="536.9" y="658.8" width="10.5" height="10.6" fill="#fff9b1" filter="url(#ss2)"/>
<text x="542.1" y="661.57" font-size="1.85" fill="#333" text-anchor="middle">Allow</text>
<text x="542.1" y="663.70" font-size="1.85" fill="#333" text-anchor="middle">users to</text>
<text x="542.1" y="665.83" font-size="1.85" fill="#333" text-anchor="middle">drag</text>
<rect x="537.9" y="667.1" width="1.700" height="1.100" fill="#e8453c"/>
<rect x="539.8" y="667.1" width="1.700" height="1.100" fill="#f5d130"/>
<rect x="541.7" y="667.1" width="1.700" height="1.100" fill="#29b6e8"/>
<rect x="558.0" y="662.3" width="10.5" height="10.6" fill="#f5d130" filter="url(#ss2)"/>
<text x="563.2" y="665.07" font-size="1.85" fill="#333" text-anchor="middle">Improve</text>
<text x="563.2" y="667.20" font-size="1.85" fill="#333" text-anchor="middle">accessibility</text>
<text x="563.2" y="669.33" font-size="1.85" fill="#333" text-anchor="middle">features</text>
<rect x="559.0" y="670.6" width="1.700" height="1.100" fill="#e8453c"/>
<rect x="560.9" y="670.6" width="1.700" height="1.100" fill="#f5d130"/>
<rect x="562.8" y="670.6" width="1.700" height="1.100" fill="#29b6e8"/>
<rect x="546.3" y="672.8" width="10.5" height="10.6" fill="#ff9d48" filter="url(#ss2)"/>
<text x="551.5" y="675.57" font-size="1.85" fill="#333" text-anchor="middle">Make users</text>
<text x="551.5" y="677.70" font-size="1.85" fill="#333" text-anchor="middle">what they</text>
<text x="551.5" y="679.83" font-size="1.85" fill="#333" text-anchor="middle">can reach</text>
<rect x="547.3" y="681.1" width="1.700" height="1.100" fill="#e8453c"/>
<rect x="549.2" y="681.1" width="1.700" height="1.100" fill="#f5d130"/>
<rect x="551.1" y="681.1" width="1.700" height="1.100" fill="#29b6e8"/>
<rect x="557.5" y="680.6" width="10.5" height="10.6" fill="#6ccbc5" filter="url(#ss2)"/>
<text x="562.8" y="683.37" font-size="1.85" fill="#333" text-anchor="middle">User</text>
<text x="562.8" y="685.50" font-size="1.85" fill="#333" text-anchor="middle">defined</text>
<text x="562.8" y="687.63" font-size="1.85" fill="#333" text-anchor="middle">goals</text>
<rect x="558.5" y="688.9" width="1.700" height="1.100" fill="#e8453c"/>
<rect x="560.4" y="688.9" width="1.700" height="1.100" fill="#f5d130"/>
<rect x="562.3" y="688.9" width="1.700" height="1.100" fill="#29b6e8"/>
<rect x="482.2" y="689.5" width="10.5" height="10.6" fill="#7b8cf0" filter="url(#ss2)"/>
<text x="487.4" y="693.34" font-size="1.85" fill="#333" text-anchor="middle">Universal</text>
<text x="487.4" y="695.46" font-size="1.85" fill="#333" text-anchor="middle">portal</text>
<rect x="483.2" y="697.8" width="1.700" height="1.100" fill="#e8453c"/>
<rect x="485.1" y="697.8" width="1.700" height="1.100" fill="#f5d130"/>
<rect x="487.0" y="697.8" width="1.700" height="1.100" fill="#29b6e8"/>
<rect x="503.3" y="693.0" width="10.5" height="10.6" fill="#f5d130" filter="url(#ss2)"/>
<text x="508.6" y="696.84" font-size="1.85" fill="#333" text-anchor="middle">Navigation</text>
<text x="508.6" y="698.96" font-size="1.85" fill="#333" text-anchor="middle">hierarchy</text>
<rect x="504.3" y="701.3" width="1.700" height="1.100" fill="#e8453c"/>
<rect x="506.2" y="701.3" width="1.700" height="1.100" fill="#f5d130"/>
<rect x="508.1" y="701.3" width="1.700" height="1.100" fill="#29b6e8"/>
<rect x="473.0" y="706.4" width="10.5" height="10.6" fill="#6ccbc5" filter="url(#ss2)"/>
<text x="478.2" y="710.24" font-size="1.85" fill="#333" text-anchor="middle">Improved</text>
<text x="478.2" y="712.36" font-size="1.85" fill="#333" text-anchor="middle">history list</text>
<rect x="474.0" y="714.7" width="1.700" height="1.100" fill="#e8453c"/>
<rect x="475.9" y="714.7" width="1.700" height="1.100" fill="#f5d130"/>
<rect x="477.8" y="714.7" width="1.700" height="1.100" fill="#29b6e8"/>
<rect x="491.6" y="703.6" width="10.5" height="10.6" fill="#7b8cf0" filter="url(#ss2)"/>
<text x="496.9" y="706.37" font-size="1.85" fill="#333" text-anchor="middle">Improved</text>
<text x="496.9" y="708.50" font-size="1.85" fill="#333" text-anchor="middle">offline</text>
<text x="496.9" y="710.63" font-size="1.85" fill="#333" text-anchor="middle">mode</text>
<rect x="492.6" y="711.9" width="1.700" height="1.100" fill="#e8453c"/>
<rect x="494.5" y="711.9" width="1.700" height="1.100" fill="#f5d130"/>
<rect x="496.4" y="711.9" width="1.700" height="1.100" fill="#29b6e8"/>
<rect x="503.0" y="711.4" width="10.5" height="10.6" fill="#7b8cf0" filter="url(#ss2)"/>
<text x="508.2" y="714.17" font-size="1.85" fill="#333" text-anchor="middle">Faster</text>
<text x="508.2" y="716.30" font-size="1.85" fill="#333" text-anchor="middle">network</text>
<text x="508.2" y="718.43" font-size="1.85" fill="#333" text-anchor="middle">connections</text>
<rect x="504.0" y="719.7" width="1.700" height="1.100" fill="#e8453c"/>
<rect x="505.9" y="719.7" width="1.700" height="1.100" fill="#f5d130"/>
<rect x="507.8" y="719.7" width="1.700" height="1.100" fill="#29b6e8"/>
<rect x="488.0" y="718.0" width="10.5" height="10.6" fill="#6ccbc5" filter="url(#ss2)"/>
<text x="493.2" y="720.77" font-size="1.85" fill="#333" text-anchor="middle">Bookmark</text>
<text x="493.2" y="722.90" font-size="1.85" fill="#333" text-anchor="middle">and</text>
<text x="493.2" y="725.03" font-size="1.85" fill="#333" text-anchor="middle">multiselect</text>
<rect x="489.0" y="726.3" width="1.700" height="1.100" fill="#e8453c"/>
<rect x="490.9" y="726.3" width="1.700" height="1.100" fill="#f5d130"/>
<rect x="492.8" y="726.3" width="1.700" height="1.100" fill="#29b6e8"/>
<rect x="675" y="616" width="70.500" height="71.100" rx="14" fill="#d6dcfa"/>
<text x="710.2" y="623.2" font-size="3.900" font-weight="bold" fill="#333" text-anchor="middle">Customization</text>
<rect x="750.2" y="616" width="70.500" height="71.100" rx="14" fill="#fdbfbf"/>
<text x="785.4" y="623.2" font-size="3.900" font-weight="bold" fill="#333" text-anchor="middle">Flexibility</text>
<rect x="825.9" y="616" width="70.500" height="71.100" rx="14" fill="#c3ddd5"/>
<text x="861.1" y="623.2" font-size="3.900" font-weight="bold" fill="#333" text-anchor="middle">Workflow</text>
<rect x="675" y="692.5" width="70.500" height="71.100" rx="14" fill="#fbe8a0"/>
<text x="710.2" y="699.7" font-size="3.900" font-weight="bold" fill="#333" text-anchor="middle">Folders</text>
<rect x="750.2" y="692.5" width="70.500" height="71.100" rx="14" fill="#dfcbfb"/>
<text x="785.4" y="699.7" font-size="3.900" font-weight="bold" fill="#333" text-anchor="middle">Data</text>
<rect x="825.9" y="692.5" width="70.500" height="71.100" rx="14" fill="#f8d9d9"/>
<text x="861.1" y="699.7" font-size="3.900" font-weight="bold" fill="#333" text-anchor="middle">Brand</text>
<rect x="901.600" y="616.500" width="63" height="147" rx="14" fill="#fff" stroke="#5566e0" stroke-width=".9"/>
<text x="933.200" y="623.200" font-size="3.900" font-weight="bold" fill="#333" text-anchor="middle">Priorities</text>
<g fill="none" stroke="#b0b8f4" stroke-width=".7"><path d="M684.500 616V647.500H691"/><path d="M973.600 649.300H955"/></g>
<g fill="#4a5bdb"><path d="M690.300 646l2.200 1.500-2.200 1.500z"/><circle cx="955" cy="649.300" r=".9"/></g>
<rect x="693.2" y="639.2" width="14.9" height="14.9" fill="#f5f5f5" filter="url(#ss2)"/>
<text x="700.7" y="645.08" font-size="1.9" fill="#444" text-anchor="middle">Redesign</text>
<text x="700.7" y="647.27" font-size="1.9" fill="#444" text-anchor="middle">notification</text>
<text x="700.7" y="649.45" font-size="1.9" fill="#444" text-anchor="middle">panel</text>
<rect x="712.2" y="639.2" width="14.9" height="14.9" fill="#f5f5f5" filter="url(#ss2)"/>
<text x="719.7" y="642.90" font-size="1.9" fill="#444" text-anchor="middle">Reschedule</text>
<text x="719.7" y="645.08" font-size="1.9" fill="#444" text-anchor="middle">reminders</text>
<text x="719.7" y="647.27" font-size="1.9" fill="#444" text-anchor="middle">following a</text>
<text x="719.7" y="649.45" font-size="1.9" fill="#444" text-anchor="middle">simple</text>
<text x="719.7" y="651.64" font-size="1.9" fill="#444" text-anchor="middle">flow chart</text>
<rect x="702.7" y="657.7" width="14.9" height="14.9" fill="#f5f5f5" filter="url(#ss2)"/>
<text x="710.2" y="662.49" font-size="1.9" fill="#444" text-anchor="middle">Widget</text>
<text x="710.2" y="664.68" font-size="1.9" fill="#444" text-anchor="middle">customize for</text>
<text x="710.2" y="666.86" font-size="1.9" fill="#444" text-anchor="middle">adding things</text>
<text x="710.2" y="669.05" font-size="1.9" fill="#444" text-anchor="middle">you mostly</text>
<rect x="778.3" y="636.7" width="14.9" height="14.9" fill="#f5f5f5" filter="url(#ss2)"/>
<text x="785.8" y="641.49" font-size="1.9" fill="#444" text-anchor="middle">Revisit</text>
<text x="785.8" y="643.68" font-size="1.9" fill="#444" text-anchor="middle">accessibility</text>
<text x="785.8" y="645.86" font-size="1.9" fill="#444" text-anchor="middle">settings</text>
<text x="785.8" y="648.05" font-size="1.9" fill="#444" text-anchor="middle">approach</text>
<rect x="835.0" y="636.4" width="14.9" height="14.9" fill="#f5f5f5" filter="url(#ss2)"/>
<text x="842.5" y="642.28" font-size="1.9" fill="#444" text-anchor="middle">How can we</text>
<text x="842.5" y="644.47" font-size="1.9" fill="#444" text-anchor="middle">speed up our</text>
<text x="842.5" y="646.65" font-size="1.9" fill="#444" text-anchor="middle">document?</text>
<rect x="854.0" y="636.4" width="14.9" height="14.9" fill="#f5f5f5" filter="url(#ss2)"/>
<text x="861.5" y="641.19" font-size="1.9" fill="#444" text-anchor="middle">Develop a</text>
<text x="861.5" y="643.38" font-size="1.9" fill="#444" text-anchor="middle">better</text>
<text x="861.5" y="645.56" font-size="1.9" fill="#444" text-anchor="middle">alternative</text>
<text x="861.5" y="647.75" font-size="1.9" fill="#444" text-anchor="middle">input process</text>
<rect x="872.9" y="636.4" width="14.9" height="14.9" fill="#f5f5f5" filter="url(#ss2)"/>
<text x="880.4" y="642.28" font-size="1.9" fill="#444" text-anchor="middle">Rethink our</text>
<text x="880.4" y="644.47" font-size="1.9" fill="#444" text-anchor="middle">workflow</text>
<text x="880.4" y="646.65" font-size="1.9" fill="#444" text-anchor="middle">hierarchy</text>
<rect x="712.5" y="715.5" width="14.9" height="14.9" fill="#f5f5f5" filter="url(#ss2)"/>
<text x="720.0" y="720.29" font-size="1.9" fill="#444" text-anchor="middle">Set up place</text>
<text x="720.0" y="722.48" font-size="1.9" fill="#444" text-anchor="middle">process</text>
<text x="720.0" y="724.66" font-size="1.9" fill="#444" text-anchor="middle">materials</text>
<text x="720.0" y="726.85" font-size="1.9" fill="#444" text-anchor="middle">yourself</text>
<rect x="692.5" y="726.7" width="14.9" height="14.9" fill="#f5f5f5" filter="url(#ss2)"/>
<text x="700.0" y="730.40" font-size="1.9" fill="#444" text-anchor="middle">Explore other</text>
<text x="700.0" y="732.58" font-size="1.9" fill="#444" text-anchor="middle">ideas</text>
<text x="700.0" y="734.77" font-size="1.9" fill="#444" text-anchor="middle">and organize</text>
<text x="700.0" y="736.95" font-size="1.9" fill="#444" text-anchor="middle">tagging the</text>
<text x="700.0" y="739.14" font-size="1.9" fill="#444" text-anchor="middle">tags</text>
<rect x="767.2" y="713.0" width="14.9" height="14.9" fill="#f5f5f5" filter="url(#ss2)"/>
<text x="774.7" y="719.98" font-size="1.9" fill="#444" text-anchor="middle">Modular data</text>
<text x="774.7" y="722.16" font-size="1.9" fill="#444" text-anchor="middle">visualization</text>
<rect x="787.0" y="718.2" width="14.9" height="14.9" fill="#f5f5f5" filter="url(#ss2)"/>
<text x="794.5" y="719.71" font-size="1.9" fill="#444" text-anchor="middle">Explore how can</text>
<text x="794.5" y="721.90" font-size="1.9" fill="#444" text-anchor="middle">other businesses</text>
<text x="794.5" y="724.08" font-size="1.9" fill="#444" text-anchor="middle">tools and</text>
<text x="794.5" y="726.27" font-size="1.9" fill="#444" text-anchor="middle">documents make</text>
<text x="794.5" y="728.45" font-size="1.9" fill="#444" text-anchor="middle">data</text>
<text x="794.5" y="730.64" font-size="1.9" fill="#444" text-anchor="middle">structure</text>
<text x="794.5" y="732.82" font-size="1.9" fill="#444" text-anchor="middle">flexible</text>
<rect x="847.0" y="720.0" width="14.9" height="14.9" fill="#f5f5f5" filter="url(#ss2)"/>
<text x="854.5" y="726.98" font-size="1.9" fill="#444" text-anchor="middle">Improve our</text>
<text x="854.5" y="729.16" font-size="1.9" fill="#444" text-anchor="middle">History</text>
<rect x="865.0" y="714.0" width="14.9" height="14.9" fill="#f5f5f5" filter="url(#ss2)"/>
<text x="872.5" y="719.88" font-size="1.9" fill="#444" text-anchor="middle">Develop ideas</text>
<text x="872.5" y="722.07" font-size="1.9" fill="#444" text-anchor="middle">for custom</text>
<text x="872.5" y="724.25" font-size="1.9" fill="#444" text-anchor="middle">guidelines</text>
<rect x="912" y="643.4" width="42.900" height="12.6" fill="#fff" stroke="#c9dcff" stroke-width=".5"/>
<rect x="911.700" y="643.4" width=".8" height="12.6" fill="#2a7de1"/>
<text x="914.800" y="647.4" font-size="3.300" fill="#666">Modular data views</text>
<rect x="915" y="650.4" width="11" height="3" fill="#2196e8"/>
<rect x="927.2" y="650.4" width="6.6" height="3" fill="#1fa67a"/>
<rect x="912" y="673.2" width="42.900" height="12.4" fill="#fff" stroke="#ffd5cc" stroke-width=".5"/>
<rect x="911.700" y="673.2" width=".8" height="12.4" fill="#f0674a"/>
<text x="914.800" y="677.2" font-size="3.300" fill="#666">Revisit accessibility</text>
<rect x="915" y="680.0" width="11" height="3" fill="#2196e8"/>
<rect x="927.2" y="680.0" width="7.5" height="3" fill="#2196e8"/>
<rect x="912" y="703.5" width="42.900" height="15" fill="#fff" stroke="#ffd5cc" stroke-width=".5"/>
<rect x="911.700" y="703.5" width=".8" height="15" fill="#f0674a"/>
<text x="914.800" y="707.5" font-size="3.300" fill="#666">develop a better</text>
<text x="914.800" y="710.8" font-size="3.300" fill="#666">alternative input</text>
<rect x="915" y="713.9" width="7" height="3" fill="#2196e8"/>
</svg>
<div id="pdfbar" class="abs"></div>

<svg class="abs" style="left:22px;top:88px" width="24" height="24" viewBox="0 0 24 24"><path fill="#fff" d="M4 18h16v-2H4v2zm0-5h16v-2H4v2zm0-7v2h16V6H4z"/></svg>
<div id="pdftitle" class="abs rob" style="left:68px;top:72px;height:56px;line-height:56px;font-size:15.2px;white-space:nowrap;transform-origin:0 50%;transform:scaleX(.92);-webkit-text-stroke:.3px #fff">Presentación de PowerPoint</div>
<div class="abs" style="left:493px;top:90px;width:24px;height:20px;background:#191b1c"></div>
<div class="abs rob" style="left:493px;top:90px;width:24px;height:20px;line-height:20px;font-size:13px;text-align:center">4</div>
<div class="abs rob" style="left:519px;top:90px;width:10px;height:20px;line-height:20px;font-size:13px;text-align:center">/</div>
<div class="abs rob" style="left:532px;top:90px;width:12px;height:20px;line-height:20px;font-size:13px;text-align:center">9</div>
<div class="abs" style="left:566px;top:93px;width:1px;height:15px;background:#6f7275"></div>
<svg class="abs" style="left:577px;top:88px" width="24" height="24" viewBox="0 0 24 24"><path fill="#fff" d="M18 13H6v-2h12v2z"/></svg>
<div class="abs" style="left:611px;top:90px;width:46px;height:20px;background:#191b1c"></div>
<div class="abs rob" style="left:611px;top:90px;width:46px;height:20px;line-height:20px;font-size:13px;letter-spacing:-.35px;text-align:center">98%</div>
<svg class="abs" style="left:667px;top:88px" width="24" height="24" viewBox="0 0 24 24"><path fill="#fff" d="M18 13h-5v5h-2v-5H6v-2h5V6h2v5h5v2z"/></svg>
<div class="abs" style="left:701px;top:93px;width:1px;height:15px;background:#6f7275"></div>
<svg class="abs" style="left:720px;top:88px" width="24" height="24" viewBox="0 0 24 24"><path fill="#fff" fill-rule="evenodd" d="M5 4.500h14c1.100 0 2 .9 2 2v11c0 1.100-.9 2-2 2H5c-1.100 0-2-.9-2-2v-11c0-1.100.9-2 2-2zm0 2v11h14v-11H5zM6 12l3.500-2.700v5.400L6 12zm12 0l-3.500 2.700V9.300L18 12z"/></svg>
<svg class="abs" style="left:756px;top:88px" width="24" height="24" viewBox="0 0 24 24"><path fill="#fff" d="M7.340 6.410L.860 12.900l6.490 6.480 6.490-6.480-6.500-6.490zM3.690 12.900l3.660-3.660L11 12.900l-3.660 3.660-3.650-3.660zm15.670-6.260C17.610 4.880 15.300 4 13 4V.760L8.760 5 13 9.240V6c1.790 0 3.580.68 4.950 2.050 2.730 2.730 2.730 7.170 0 9.900C16.580 19.320 14.790 20 13 20c-.970 0-1.940-.210-2.840-.610l-1.490 1.490C10.020 21.620 11.510 22 13 22c2.300 0 4.610-.880 6.360-2.640 3.520-3.510 3.520-9.210 0-12.720z" transform="translate(12 12) scale(.8) translate(-11.500 -11.700)"/></svg>
<svg class="abs" style="left:1153px;top:88px" width="24" height="24" viewBox="0 0 24 24"><path fill="#fff" d="M19 9h-4V3H9v6H5l7 7 7-7zM5 18v2h14v-2H5z" transform="translate(12 12) scale(.88) translate(-12 -11.500)"/></svg>
<svg class="abs" style="left:1193px;top:88px" width="24" height="24" viewBox="0 0 24 24"><path fill="#fff" d="M19 8H5c-1.660 0-3 1.340-3 3v6h4v4h12v-4h4v-6c0-1.660-1.340-3-3-3zm-3 11H8v-5h8v5zm3-7c-.550 0-1-.450-1-1s.450-1 1-1 1 .450 1 1-.450 1-1 1zm-1-9H6v4h12V3z" transform="translate(12 12) scale(.86) translate(-12 -12)"/></svg>
<svg class="abs" style="left:1233px;top:88px" width="24" height="24" viewBox="0 0 24 24"><g fill="#fff"><circle cx="12" cy="7" r="1.700"/><circle cx="12" cy="12" r="1.700"/><circle cx="12" cy="17" r="1.700"/></g></svg>
<div id="sbar" class="abs"></div>
<div id="thumb" class="abs"></div>
<!-- scrollbar arrows -->
<svg class="abs" style="left:1264px;top:128px" width="15" height="15" viewBox="0 0 15 15"><path d="M4 10l3.500-4 3.500 4z" fill="#505050"/></svg>
<svg class="abs" style="left:1264px;top:944px" width="15" height="15" viewBox="0 0 15 15"><path d="M4 5l3.500 4 3.500-4z" fill="#505050"/></svg>
<div id="bR" class="abs"></div><div id="bB" class="abs"></div>

</div>
</body>
</html>
